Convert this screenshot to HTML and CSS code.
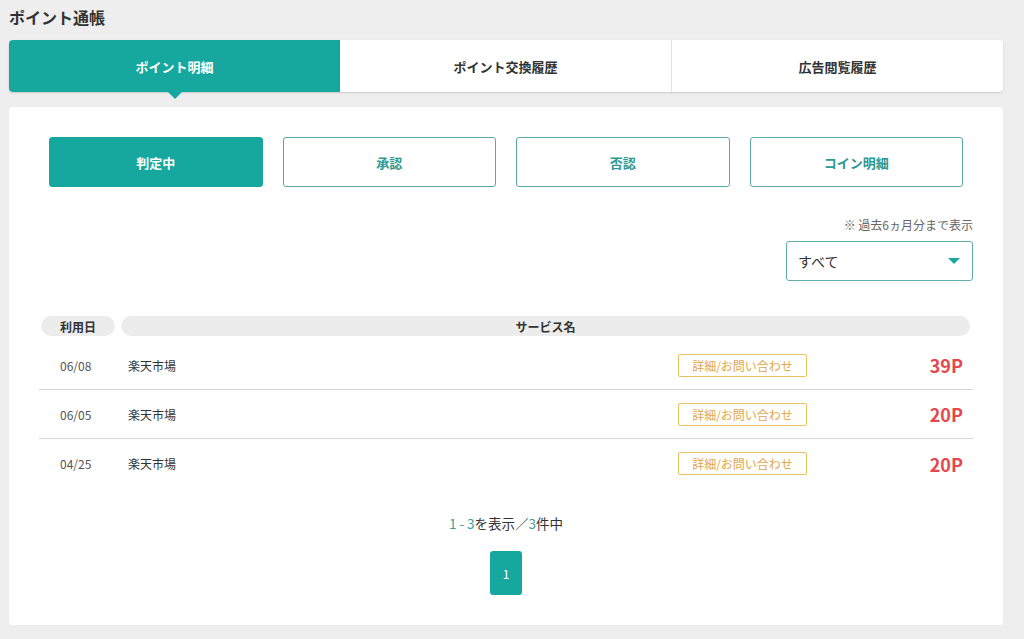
FILE: index.html
```html
<!DOCTYPE html>
<html lang="ja">
<head>
<meta charset="utf-8">
<title>ポイント通帳</title>
<link rel="stylesheet" href="styles.css">
</head>
<body>
<div class="page">
  <h1 class="title">ポイント通帳</h1>
  <nav class="tabs">
    <a class="tab active">ポイント明細</a>
    <a class="tab">ポイント交換履歴</a>
    <a class="tab">広告閲覧履歴</a>
  </nav>
  <section class="card">
    <div class="filters">
      <a class="filter active">判定中</a>
      <a class="filter">承認</a>
      <a class="filter">否認</a>
      <a class="filter">コイン明細</a>
    </div>
    <div class="period">
      <p class="note">※ 過去6ヵ月分まで表示</p>
      <div class="select">
        <span>すべて</span>
        <span class="caret"></span>
      </div>
    </div>
    <div class="table">
      <div class="thead">
        <div class="th th-date">利用日</div>
        <div class="th th-name">サービス名</div>
      </div>
      <div class="row">
        <div class="date">06/08</div>
        <div class="name">楽天市場</div>
        <a class="detail">詳細/お問い合わせ</a>
        <div class="points">39P</div>
      </div>
      <div class="row">
        <div class="date">06/05</div>
        <div class="name">楽天市場</div>
        <a class="detail">詳細/お問い合わせ</a>
        <div class="points">20P</div>
      </div>
      <div class="row">
        <div class="date">04/25</div>
        <div class="name">楽天市場</div>
        <a class="detail">詳細/お問い合わせ</a>
        <div class="points">20P</div>
      </div>
    </div>
    <p class="count"><span class="num">1 - 3</span>を表示／<span class="num">3</span>件中</p>
    <div class="pager">
      <a class="page-btn">1</a>
    </div>
  </section>
</div>
</body>
</html>
```

FILE: styles.css
```css
* { box-sizing: border-box; }
body {
  margin: 0;
  background: #eeeeee;
  font-family: "Noto Sans CJK JP", "Noto Sans", sans-serif;
  color: #333;
}
.page {
  width: 1012px;
  padding: 0 9px 14px 9px;
}
.title {
  margin: 0;
  height: 40px;
  padding-top: 5px;
  font-size: 16px;
  line-height: 24px;
  font-weight: 700;
  color: #333;
}
.tabs {
  display: flex;
  height: 52px;
  background: #fff;
  border-radius: 4px;
  box-shadow: 0 1px 2px rgba(0,0,0,0.15);
}
.tab {
  position: relative;
  flex: 1;
  display: flex;
  align-items: center;
  justify-content: center;
  font-size: 13px;
  font-weight: 700;
  color: #333;
}
.tab + .tab { border-left: 1px solid #e2e2e2; }
.tab.active + .tab { border-left: 0; }
.tab.active {
  background: #16a89e;
  color: #fff;
  border-radius: 4px 0 0 4px;
}
.tab.active::after {
  content: "";
  position: absolute;
  left: 50%;
  bottom: -7px;
  margin-left: -7px;
  border-left: 7px solid transparent;
  border-right: 7px solid transparent;
  border-top: 7px solid #16a89e;
}
.card {
  margin-top: 15px;
  background: #fff;
  border-radius: 4px;
  padding: 30px 30px 30px 30px;
}
.filters {
  display: flex;
  gap: 20px;
  padding: 0 10px;
}
.filter {
  flex: 1;
  height: 50px;
  display: flex;
  align-items: center;
  justify-content: center;
  border: 1px solid #5aa9a9;
  border-radius: 3px;
  font-size: 13px;
  font-weight: 700;
  color: #2b9a94;
}
.filter.active {
  background: #16a89e;
  border-color: #16a89e;
  color: #fff;
}
.period {
  display: flex;
  flex-direction: column;
  align-items: flex-end;
  margin-top: 30px;
}
.note {
  margin: 0;
  font-size: 12px;
  line-height: 16px;
  color: #666;
}
.select {
  margin-top: 8px;
  width: 187px;
  height: 40px;
  border: 1px solid #5fb0ab;
  border-radius: 3px;
  display: flex;
  align-items: center;
  justify-content: space-between;
  padding: 0 12px 0 11px;
  font-size: 14px;
  color: #333;
}
.caret {
  width: 0;
  height: 0;
  border-left: 6px solid transparent;
  border-right: 6px solid transparent;
  border-top: 6px solid #17a99f;
}
.table {
  margin-top: 35px;
}
.thead {
  display: flex;
  gap: 6px;
  padding: 0 3px 0 2px;
  margin-bottom: 5px;
}
.th {
  height: 20px;
  background: #ececec;
  border-radius: 10px;
  display: flex;
  align-items: center;
  justify-content: center;
  font-size: 12px;
  font-weight: 700;
  color: #333;
}
.th-date { width: 74px; }
.th-name { flex: 1; }
.row {
  display: flex;
  align-items: center;
  height: 49px;
  border-bottom: 1px solid #d4d4d4;
  font-size: 12px;
  color: #333;
}
.row:last-child { border-bottom: 0; }
.date {
  width: 89px;
  padding-left: 21px;
  color: #555;
}
.name { flex: 1; }
.detail {
  width: 129px;
  height: 23px;
  display: flex;
  align-items: center;
  justify-content: center;
  border: 1px solid #ecc25e;
  border-radius: 2px;
  font-size: 12px;
  color: #e2a74b;
  margin-right: 10px;
}
.points {
  width: 156px;
  text-align: right;
  padding-right: 10px;
  font-size: 18px;
  font-weight: 700;
  color: #e5474c;
}
.count {
  margin: 27px 0 0;
  text-align: center;
  font-size: 13.5px;
  line-height: 16px;
  color: #333;
}
.num { color: #3a9e9a; }
.pager {
  display: flex;
  justify-content: center;
  margin-top: 20px;
}
.page-btn {
  width: 32px;
  height: 44px;
  background: #16a89e;
  color: #fff;
  border-radius: 3px;
  display: flex;
  align-items: center;
  justify-content: center;
  font-size: 12px;
}
```
